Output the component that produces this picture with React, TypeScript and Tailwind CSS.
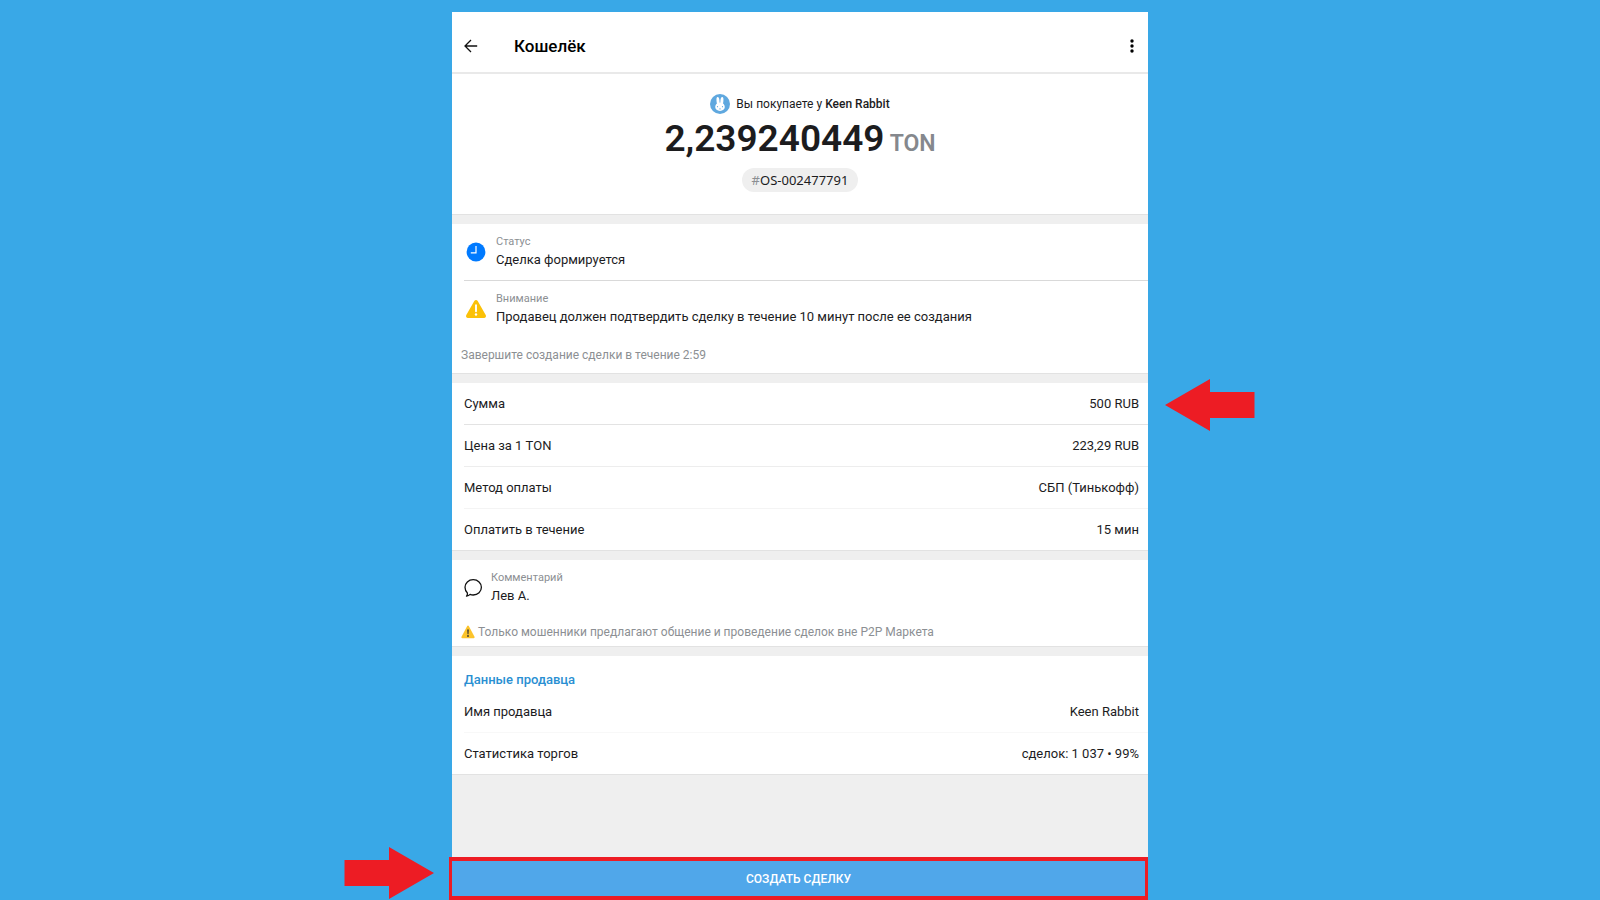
import React from 'react';

// --- TYPE DEFINITIONS ---
type Detail = {
  label: string;
  value: string;
  line?: string;
  marked?: boolean;
};

// --- DATA ---
const dealDetails: Detail[] = [
  { label: 'Сумма', value: '500 RUB', line: 'border-[#e3e3e3]', marked: true },
  { label: 'Цена за 1 TON', value: '223,29 RUB', line: 'border-[#ededed]' },
  { label: 'Метод оплаты', value: 'СБП (Тинькофф)', line: 'border-[#f4f4f4]' },
  { label: 'Оплатить в течение', value: '15 мин' },
];

const sellerDetails: Detail[] = [
  { label: 'Имя продавца', value: 'Keen Rabbit', line: 'border-[#f8f8f8]' },
  { label: 'Статистика торгов', value: 'сделок: 1 037 • 99%' },
];

// --- ICONS ---
const BackIcon = () => (
  <svg width="14" height="14" viewBox="0 0 14 14" fill="none" stroke="#111" strokeWidth="1.3">
    <path d="M13.2 7H1.2M7 1 1 7l6 6" />
  </svg>
);

const MoreIcon = () => (
  <svg width="14" height="14" viewBox="0 0 14 14" fill="#000">
    <circle cx="7" cy="2" r="1.7" />
    <circle cx="7" cy="7" r="1.7" />
    <circle cx="7" cy="12" r="1.7" />
  </svg>
);

const RabbitAvatar = () => (
  <svg width="20" height="20" viewBox="0 0 20 20">
    <circle cx="10" cy="10" r="10" fill="#5fa8df" />
    <g fill="#fff">
      <ellipse cx="8" cy="6.8" rx="1.5" ry="3.9" transform="rotate(-5 8 6.8)" />
      <ellipse cx="11.9" cy="6.8" rx="1.5" ry="3.9" transform="rotate(5 11.9 6.8)" />
      <path d="M10 8.6c2.8 0 4.8 1.8 4.8 4.5 0 2.3-2 3.9-4.8 3.9s-4.8-1.6-4.8-3.9c0-2.7 2-4.5 4.8-4.5z" />
    </g>
    <circle cx="7.5" cy="12.7" r=".6" fill="#5fa8df" />
    <circle cx="12.5" cy="12.7" r=".6" fill="#5fa8df" />
    <path d="m9.3 14.2 1.4 1.4m0-1.4-1.4 1.4" stroke="#5fa8df" strokeWidth=".5" />
  </svg>
);

const ClockIcon = () => (
  <svg width="24" height="24" viewBox="-1 -1 24 24" fill="none">
    <circle cx="11" cy="11" r="9.4" fill="#007aff" />
    <path d="M11 5v6.8H5.8" stroke="#fff" strokeWidth="1.2" />
  </svg>
);

const WarningIcon = () => (
  <svg width="24" height="24" viewBox="-1 -1 24 24">
    <path d="M9.3 2.9c.8-1.3 2.6-1.3 3.4 0l8 14.1c.8 1.4-.1 3-1.7 3H3c-1.6 0-2.5-1.6-1.7-3z" fill="#fbc108" />
    <path d="M11 7.3v6" stroke="#fff" strokeWidth="1.9" strokeLinecap="round" />
    <circle cx="11" cy="16.5" r="1.2" fill="#fff" />
  </svg>
);

const BubbleIcon = () => (
  <svg width="20" height="20" viewBox="0 0 20 20" fill="none" stroke="#111" strokeWidth="1.3" strokeLinejoin="round">
    <path d="M10.2 1.7c4.7 0 8.2 3.4 8.2 7.6s-3.5 7.7-8.2 7.7c-1.1 0-2.2-.2-3.1-.6-.9.9-2.2 1.5-3.6 1.7.8-.9 1.1-2 .9-3.2C2.900 13.500 2 11.500 2 9.300c0-4.200 3.500-7.600 8.200-7.600z" />
  </svg>
);

const SmallWarningIcon = () => (
  <svg width="14" height="14" viewBox="0 0 14 14">
    <path d="M6.2 1.1c.4-.7 1.2-.7 1.6 0l5.7 10.7c.3.7-.1 1.4-.8 1.4H1.3c-.7 0-1.1-.7-.8-1.4z" fill="#fcc42c" />
    <path d="M6.2 4.6h1.6l-.3 4.6h-1z" fill="#333" />
    <circle cx="7" cy="11" r=".9" fill="#333" />
  </svg>
);

const Arrow = ({ className }: { className: string }) => (
  <svg className={className} width="90" height="52" viewBox="0 0 90 52" aria-hidden="true">
    <path d="M0 26 45 0v13h44.5v26H45v13z" fill="#ed1c24" />
  </svg>
);

// --- SHARED PARTS ---
const DetailRows = ({ rows }: { rows: Detail[] }) => (
  <dl>
    {rows.map((row) => (
      <div key={row.label} className="relative pl-3">
        <div className={`flex items-center justify-between py-2.5 pr-[9px] leading-[21px] ${row.line ? `border-b ${row.line}` : ''}`}>
          <dt>{row.label}</dt>
          <dd>{row.value}</dd>
        </div>
        {row.marked && <Arrow className="absolute -top-1 left-full ml-[17px]" />}
      </div>
    ))}
  </dl>
);

const Notice = ({ icon, label, text }: { icon: React.ReactNode; label: string; text: string }) => (
  <div className="flex items-center gap-2">
    {icon}
    <div>
      <p className="text-[11px] leading-4 text-[#8c8f93]">{label}</p>
      <p className="leading-5">{text}</p>
    </div>
  </div>
);

const Divider = () => <div className="h-2.5 border-t border-[#e2e2e2] bg-[#efefef]" />;

// --- WALLET DEAL PAGE ---
const WalletDeal = () => {
  return (
    <div className="flex min-h-screen flex-col bg-[#39a8e7] pt-3 font-['Roboto',sans-serif] text-[13px] text-[#1c1c1e]">
      <main className="mx-auto flex w-full max-w-[696px] flex-1 flex-col bg-white">
        {/* Header */}
        <header className="flex items-center border-b-2 border-[#e9e9e9] pb-4 pl-3 pr-[9px] pt-6">
          <button type="button" aria-label="Назад">
            <BackIcon />
          </button>
          <h1 className="ml-9 flex-1 text-[17px] font-medium leading-5 text-black">Кошелёк</h1>
          <button type="button" aria-label="Меню">
            <MoreIcon />
          </button>
        </header>

        {/* Amount */}
        <section className="flex flex-col items-center pb-[22px] pt-5">
          <div className="flex items-center gap-1.5 text-xs leading-5">
            <RabbitAvatar />
            <p>
              Вы покупаете у <span className="font-medium">Keen Rabbit</span>
            </p>
          </div>
          <p className="mt-[5px] text-[37px] font-semibold leading-10">
            2,239240449 <span className="-ml-1 text-[23px] font-semibold text-[#85888d]">TON</span>
          </p>
          <p className="mt-1 rounded-full bg-[#efefef] px-2.5 font-['Noto_Sans',sans-serif] leading-6">
            <span className="text-[#8c8f93]">#</span>OS-002477791
          </p>
        </section>
        <Divider />

        {/* Status */}
        <section>
          <div className="pl-3">
            <div className="border-b border-[#d9d9d9] py-2.5">
              <Notice icon={<ClockIcon />} label="Статус" text="Сделка формируется" />
            </div>
            <div className="py-2.5">
              <Notice icon={<WarningIcon />} label="Внимание" text="Продавец должен подтвердить сделку в течение 10 минут после ее создания" />
            </div>
          </div>
          <p className="px-[9px] py-2 text-xs leading-5 text-[#8c8f93]">Завершите создание сделки в течение 2:59</p>
        </section>
        <Divider />

        {/* Deal details */}
        <DetailRows rows={dealDetails} />
        <Divider />

        {/* Comment */}
        <section>
          <div className="pb-2 pl-[11px] pt-2.5">
            <Notice icon={<BubbleIcon />} label="Комментарий" text="Лев А." />
          </div>
          <p className="flex items-center gap-[3px] px-[9px] pb-1 pt-2 text-xs leading-5 text-[#8c8f93]">
            <SmallWarningIcon />
            Только мошенники предлагают общение и проведение сделок вне P2P Маркета
          </p>
        </section>
        <Divider />

        {/* Seller */}
        <section className="pt-3">
          <h2 className="pl-3 font-medium leading-[23px] text-[#2a8fd2]">Данные продавца</h2>
          <DetailRows rows={sellerDetails} />
        </section>
        <div className="flex-1 border-t border-[#e2e2e2] bg-[#efefef]" />

        {/* Submit */}
        <div className="relative -ml-[3px]">
          <Arrow className="absolute -top-2.5 right-full mr-[15px] rotate-180" />
          <button
            type="button"
            className="block w-full border-x-[3px] border-y-4 border-[#ed1c24] bg-[#50a7ea] pt-0.5 text-xs font-medium leading-[33px] text-white"
          >
            СОЗДАТЬ СДЕЛКУ
          </button>
        </div>
      </main>
    </div>
  );
};

export default WalletDeal;
